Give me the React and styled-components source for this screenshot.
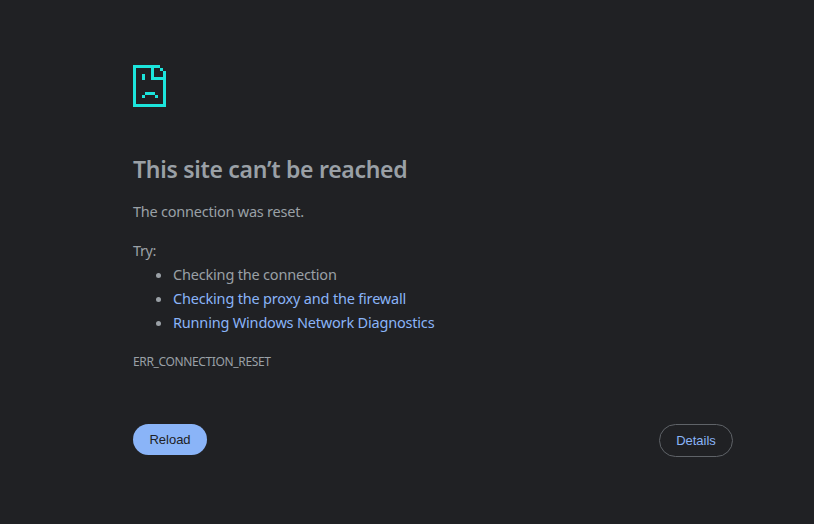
import React from "react";
import styled, { createGlobalStyle } from "styled-components";

const GlobalStyle = createGlobalStyle`
  body {
    margin: 0;
    background: #202124;
    color: #9aa0a6;
    font-family: "Noto Sans", "Open Sans", sans-serif;
    font-size: 14.5px;
    line-height: 24px;
  }
`;

const Page = styled.main`
  box-sizing: border-box;
  width: 814px;
  height: 524px;
  padding: 65px 81px 0 133px;
  overflow: hidden;
`;

const SadPage = styled.svg`
  display: block;
  width: 33px;
  height: 42px;
  fill: #1ce5dc;
  shape-rendering: crispEdges;
`;

const Title = styled.h1`
  margin: 46px 0 0;
  font-size: 23px;
  font-weight: 600;
  line-height: 32px;
  letter-spacing: -0.29px;
  white-space: nowrap;
`;

const Line = styled.p`
  margin: ${(p) => p.$top}px 0 0;
  letter-spacing: ${(p) => p.$spacing}px;
  white-space: nowrap;
`;

const Suggestions = styled.ul`
  margin: 0;
  padding: 0 0 0 40px;
`;

const Suggestion = styled.li`
  letter-spacing: -0.19px;
  white-space: nowrap;
`;

const Link = styled.a`
  color: #8ab4f8;
  text-decoration: none;
`;

const ErrorCode = styled.div`
  margin-top: 16px;
  font-size: 12px;
  letter-spacing: -0.36px;
`;

const Actions = styled.div`
  display: flex;
  justify-content: space-between;
  align-items: flex-start;
  margin-top: 50px;
`;

const Button = styled.button`
  box-sizing: border-box;
  width: 74px;
  height: ${(p) => (p.$primary ? 31 : 33)}px;
  padding: 0;
  border: ${(p) => (p.$primary ? "0" : "1px solid #5f6368")};
  border-radius: 20px;
  background: ${(p) => (p.$primary ? "#8ab4f8" : "transparent")};
  color: ${(p) => (p.$primary ? "#202124" : "#8ab4f8")};
  font: 500 13px "Liberation Sans", sans-serif;
`;

export default function App() {
  return (
    <>
      <GlobalStyle />
      <Page>
        <SadPage viewBox="0 0 33 42" aria-hidden="true">
          <path d="M0 0H27V3H21V12H30V6H33V42H0ZM3 3V39H30V15H18V3Z" fillRule="evenodd" />
          <path d="M27 3H30V6H27ZM9 9H12V15H9ZM12 27H22V30H12ZM9 30H12V33H9ZM22 30H25V33H22Z" />
        </SadPage>
        <Title>This site can’t be reached</Title>
        <Line $top={14} $spacing={-0.23}>The connection was reset.</Line>
        <Line $top={15} $spacing={-0.4}>Try:</Line>
        <Suggestions>
          <Suggestion>Checking the connection</Suggestion>
          <Suggestion>
            <Link>Checking the proxy and the firewall</Link>
          </Suggestion>
          <Suggestion>
            <Link>Running Windows Network Diagnostics</Link>
          </Suggestion>
        </Suggestions>
        <ErrorCode>ERR_CONNECTION_RESET</ErrorCode>
        <Actions>
          <Button $primary>Reload</Button>
          <Button>Details</Button>
        </Actions>
      </Page>
    </>
  );
}
